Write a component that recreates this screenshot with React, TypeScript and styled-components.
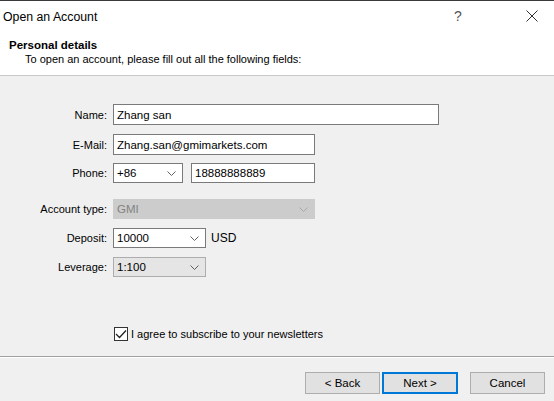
import * as React from 'react';
import styled, { createGlobalStyle } from 'styled-components';

const Global = createGlobalStyle`
    html, body {
        margin: 0;
        padding: 0;
        background: #f0f0f0;
    }
    body {
        font-family: 'Liberation Sans', Arial, sans-serif;
        font-size: 11px;
        color: #000;
    }
`;

const Window = styled.div`
    width: 554px;
    height: 401px;
    display: flex;
    flex-direction: column;
    border-top: 1px solid #3a3a3a;
    box-sizing: border-box;
    overflow: hidden;
`;

const Header = styled.div`
    background: #fff;
    height: 74px;
    border-bottom: 1px solid #c9c9c9;
    display: flex;
    flex-direction: column;
`;

const TitleBar = styled.div`
    height: 30px;
    display: flex;
    align-items: center;
    padding-left: 3px;
`;

const Title = styled.div`
    font-size: 12.3px;
    flex: 1;
    padding-top: 1px;
`;

const CaptionButton = styled.div<{ $w: number; $mr?: number }>`
    width: ${p => p.$w}px;
    margin-right: ${p => p.$mr || 0}px;
    height: 30px;
    display: flex;
    align-items: center;
    justify-content: center;
    color: #555;
    font-size: 14px;
`;

const Heading = styled.div`
    font-weight: bold;
    font-size: 11.5px;
    padding-left: 9px;
    margin-top: 7px;
    line-height: 14px;
`;

const SubHeading = styled.div`
    padding-left: 25px;
    line-height: 14px;
    margin-top: 0px;
`;

const Body = styled.div`
    flex: 1;
    padding-top: 28px;
    display: flex;
    flex-direction: column;
`;

const Row = styled.div<{ $top: number }>`
    display: grid;
    grid-template-columns: 107px auto;
    column-gap: 6px;
    align-items: center;
    margin-top: ${p => p.$top}px;
`;

const Label = styled.label`
    text-align: right;
`;

const Fields = styled.div`
    display: flex;
    align-items: center;
    gap: 8px;
`;

const TextBox = styled.div<{ $w: number; $h?: number }>`
    width: ${p => p.$w}px;
    height: ${p => p.$h || 21}px;
    box-sizing: border-box;
    border: 1px solid #7a7a7a;
    background: #fff;
    padding-left: 3px;
    display: flex;
    align-items: center;
    font-size: 11.5px;
`;

const Combo = styled.div<{ $w: number; $kind?: 'edit' | 'list' | 'disabled' }>`
    width: ${p => p.$w}px;
    height: 20px;
    box-sizing: border-box;
    border: 1px solid ${p => (p.$kind === 'disabled' ? '#cccccc' : p.$kind === 'list' ? '#adadad' : '#7a7a7a')};
    background: ${p => (p.$kind === 'disabled' ? '#cccccc' : p.$kind === 'list' ? '#e5e5e5' : '#fff')};
    color: ${p => (p.$kind === 'disabled' ? '#838383' : '#000')};
    padding-left: 3px;
    padding-right: 6px;
    display: flex;
    align-items: center;
    justify-content: space-between;
    font-size: 11.5px;
`;

const Unit = styled.span`
    margin-left: -3px;
    font-size: 12px;
`;

const CheckRow = styled.div`
    display: flex;
    align-items: center;
    margin-top: 50px;
    padding-left: 114px;
    gap: 3px;
`;

const Box = styled.div`
    width: 14px;
    height: 14px;
    box-sizing: border-box;
    border: 1px solid #333;
    background: #fff;
    display: flex;
    align-items: center;
    justify-content: center;
`;

const Footer = styled.div`
    height: 45px;
    border-top: 1px solid #a0a0a0;
    box-shadow: inset 0 1px 0 #fff;
    display: flex;
    justify-content: flex-end;
    padding: 15px 9px 0 0;
    box-sizing: border-box;
`;

const Button = styled.button<{ $def?: boolean; $gap?: number }>`
    width: ${p => (p.$def ? 76 : 75)}px;
    height: 22px;
    margin-left: ${p => p.$gap || 0}px;
    box-sizing: border-box;
    border: ${p => (p.$def ? '2px solid #0078d7' : '1px solid #adadad')};
    background: #e1e1e1;
    font-family: inherit;
    font-size: 11.5px;
    color: #000;
    padding: 0;
`;

const Chevron = ({ color = '#606060' }: { color?: string }) => (
    <svg width="9" height="5" viewBox="0 0 9 5">
        <path d="M0.5 0.5 L4.5 4.5 L8.5 0.5" fill="none" stroke={color} strokeWidth="1" />
    </svg>
);

export default function App() {
    return (
        <Window>
            <Global />
            <Header>
                <TitleBar>
                    <Title>Open an Account</Title>
                    <CaptionButton $w={30} $mr={37}>?</CaptionButton>
                    <CaptionButton $w={44}>
                        <svg width="12" height="12" viewBox="0 0 12 12">
                            <path d="M0.5 0.5 L11.5 11.5 M11.5 0.5 L0.5 11.5" stroke="#333" strokeWidth="1" />
                        </svg>
                    </CaptionButton>
                </TitleBar>
                <Heading>Personal details</Heading>
                <SubHeading>To open an account, please fill out all the following fields:</SubHeading>
            </Header>
            <Body>
                <Row $top={0}>
                    <Label>Name:</Label>
                    <TextBox $w={326}>Zhang san</TextBox>
                </Row>
                <Row $top={9}>
                    <Label>E-Mail:</Label>
                    <TextBox $w={202}>Zhang.san@gmimarkets.com</TextBox>
                </Row>
                <Row $top={8}>
                    <Label>Phone:</Label>
                    <Fields>
                        <Combo $w={70}>+86<Chevron /></Combo>
                        <TextBox $w={124} $h={20}>18888888889</TextBox>
                    </Fields>
                </Row>
                <Row $top={16}>
                    <Label>Account type:</Label>
                    <Combo $w={202} $kind="disabled">GMI<Chevron color="#a8a8a8" /></Combo>
                </Row>
                <Row $top={9}>
                    <Label>Deposit:</Label>
                    <Fields>
                        <Combo $w={93}>10000<Chevron /></Combo>
                        <Unit>USD</Unit>
                    </Fields>
                </Row>
                <Row $top={9}>
                    <Label>Leverage:</Label>
                    <Combo $w={93} $kind="list">1:100<Chevron /></Combo>
                </Row>
                <CheckRow>
                    <Box>
                        <svg width="12" height="10" viewBox="0 0 12 10">
                            <path d="M1 5 L4.5 8.5 L11 1.5" fill="none" stroke="#222" strokeWidth="1.3" />
                        </svg>
                    </Box>
                    <span>I agree to subscribe to your newsletters</span>
                </CheckRow>
            </Body>
            <Footer>
                <Button>&lt; Back</Button>
                <Button $def $gap={2}>Next &gt;</Button>
                <Button $gap={12}>Cancel</Button>
            </Footer>
        </Window>
    );
}
